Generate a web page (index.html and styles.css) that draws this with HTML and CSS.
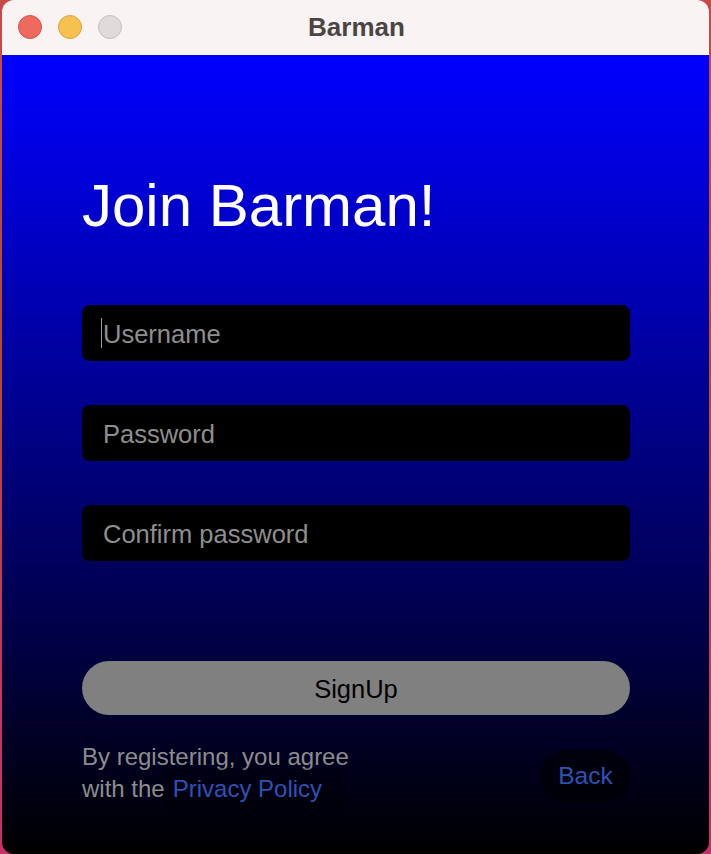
FILE: index.html
```html
<!DOCTYPE html>
<html>
<head>
<meta charset="utf-8">
<link rel="stylesheet" href="styles.css">
</head>
<body>
<div class="window">
  <div class="titlebar">
    <div class="lights">
      <span class="light red"></span>
      <span class="light yellow"></span>
      <span class="light gray"></span>
    </div>
    <div class="title">Barman</div>
  </div>
  <div class="content">
    <h1 class="heading">Join Barman!</h1>
    <div class="fields">
      <div class="field">
        <input class="input" type="text" placeholder="Username">
        <span class="caret"></span>
      </div>
      <div class="field">
        <input class="input" type="password" placeholder="Password">
      </div>
      <div class="field">
        <input class="input" type="password" placeholder="Confirm password">
      </div>
    </div>
    <button class="signup">SignUp</button>
    <div class="footer">
      <div class="legal">
        <div class="line">By registering, you agree</div>
        <div class="line line2">with the<span class="policy">Privacy Policy</span></div>
      </div>
      <button class="back">Back</button>
    </div>
  </div>
</div>
</body>
</html>
```
FILE: styles.css
```css
html, body {
  margin: 0;
  padding: 0;
  height: 854px;
  overflow: hidden;
}
body {
  background: linear-gradient(180deg, #c84a48 0%, #b84a28 40%, #c03a5a 75%, #c83068 100%);
  font-family: "Liberation Sans", Arial, sans-serif;
}
.window {
  margin-left: 2px;
  width: 707px;
  height: 854px;
  border-radius: 12px;
  overflow: hidden;
  display: flex;
  flex-direction: column;
}
.titlebar {
  height: 55px;
  background: #f9f3f3;
  position: relative;
  display: flex;
  align-items: center;
  justify-content: center;
  flex: none;
}
.lights {
  position: absolute;
  left: 16px;
  top: 15px;
  display: flex;
  gap: 16px;
}
.light {
  width: 22px;
  height: 22px;
  border-radius: 50%;
  border: 1px solid transparent;
}
.red { background: #ee6a5f; border-color: #d4564c; }
.yellow { background: #f6c14f; border-color: #d9a53e; }
.gray { background: #dfdbdb; border-color: #c6c1c1; }
.title {
  font-weight: bold;
  font-size: 26px;
  color: #4a4646;
  font-family: "Liberation Sans", Arial, sans-serif;
  margin-left: 2px;
}
.content {
  flex: 1;
  background: linear-gradient(180deg, #0000ff 0%, #000000 100%);
  padding: 0 79px 0 80px;
  display: flex;
  flex-direction: column;
}
.heading {
  margin: 116px 0 0 0;
  font-size: 60px;
  font-weight: normal;
  line-height: 69px;
  color: #ffffff;
}
.fields {
  margin-top: 65px;
  display: flex;
  flex-direction: column;
  gap: 44px;
}
.field {
  position: relative;
  height: 56px;
}
.input {
  box-sizing: border-box;
  width: 100%;
  height: 56px;
  border: none;
  outline: none;
  border-radius: 8px;
  background: #000000;
  padding: 3px 0 0 21px;
  font-family: "Liberation Sans", Arial, sans-serif;
  font-size: 25.5px;
  color: #ffffff;
}
.input::placeholder {
  color: #8e8e8e;
}
.caret {
  position: absolute;
  left: 19px;
  top: 13px;
  width: 1px;
  height: 30px;
  background: #9a9a9a;
}
.signup {
  margin-top: 100px;
  height: 54px;
  border: none;
  border-radius: 27px;
  background: #808080;
  color: #000000;
  font-family: "Liberation Sans", Arial, sans-serif;
  font-size: 25.5px;
  padding: 2px 0 0 0;
}
.footer {
  margin-top: 25px;
  display: flex;
  justify-content: space-between;
  align-items: flex-start;
}
.legal {
  color: #8c8c8c;
  font-size: 24px;
}
.line {
  height: 32px;
  line-height: 33px;
  white-space: nowrap;
}
.line2 {
  display: flex;
  align-items: center;
}
.policy {
  display: inline-block;
  margin: -5px 0 -5px -1px;
  padding: 0 22px 0 9px;
  height: 41px;
  line-height: 41px;
  color: #2c52b6;
  background: rgba(0, 0, 0, 0.22);
}
.back {
  margin-top: 10px;
  margin-right: -1px;
  width: 91px;
  height: 52px;
  border: none;
  border-radius: 26px;
  background: rgba(0, 0, 0, 0.55);
  color: #2c52b6;
  font-family: "Liberation Sans", Arial, sans-serif;
  font-size: 24.5px;
  padding: 0;
}
```
